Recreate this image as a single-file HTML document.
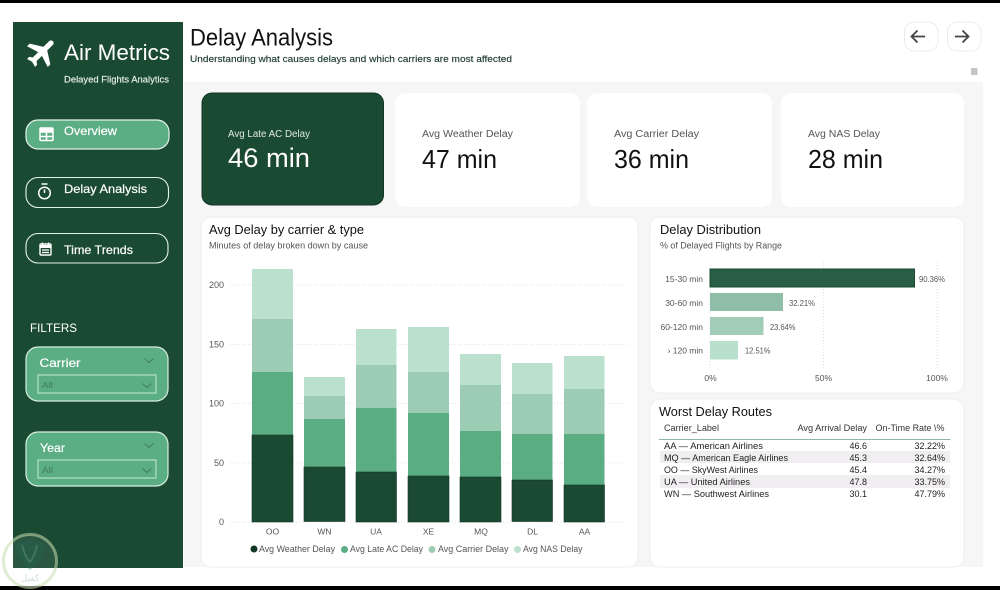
<!DOCTYPE html>
<html><head><meta charset="utf-8"><title>Delay Analysis</title>
<style>
html,body{margin:0;padding:0;background:#fff;width:1000px;height:590px;overflow:hidden}
svg{display:block;filter:blur(.3px)}
text{font-family:"Liberation Sans",sans-serif}
</style></head><body>
<svg width="1000" height="590" viewBox="0 0 1000 590" xmlns="http://www.w3.org/2000/svg">
<rect width="1000" height="590" fill="#fff"/>
<rect x="184" y="82" width="799" height="485" fill="#f6f6f6"/>
<rect width="1000" height="3" fill="#000"/>
<rect y="586" width="1000" height="4" fill="#000"/>

<!-- sidebar -->
<rect x="13" y="22" width="170" height="546" fill="#1b4a33"/>
<path transform="translate(42 52) rotate(45) scale(1.5) translate(-11.500 -12)" fill="#fff" stroke="#fff" stroke-width=".5" d="M21 16v-2l-8-5V3.500c0-.83-.67-1.500-1.500-1.500S10 2.670 10 3.500V9l-8 5v2l8-2.500V19l-2 1.500V22l3.500-1 3.500 1v-1.500L13 19v-5.500l8 2.500z"/>
<text x="64" y="60" font-size="22" fill="#fff" textLength="106" lengthAdjust="spacingAndGlyphs">Air Metrics</text>
<text x="64" y="82.500" font-size="9" fill="#e6f0ea" stroke="#e6f0ea" stroke-width=".15" textLength="105" lengthAdjust="spacingAndGlyphs">Delayed  Flights Analytics</text>

<rect x="26" y="120" width="143" height="29" rx="12" fill="#5bad83" stroke="#e4f3ea" stroke-width="1.200"/>
<g fill="none" stroke="#fff" stroke-width="1.500"><rect x="40" y="128" width="13" height="12.500" rx="1"/><path d="M40 132h13M40 136.500h13M46.500 132v8.500"/></g>
<rect x="40" y="127.500" width="13" height="4" fill="#fff"/>
<text x="64" y="135" font-size="12" fill="#fff" stroke="#fff" stroke-width=".2" textLength="53" lengthAdjust="spacingAndGlyphs">Overview</text>

<rect x="26" y="177.500" width="142.500" height="30" rx="12" fill="none" stroke="#e4f3ea" stroke-width="1.100"/>
<circle cx="44.500" cy="193" r="5.800" fill="none" stroke="#fff" stroke-width="1.500"/>
<path d="M41.500 184h6M44.500 193v-3.500" stroke="#fff" stroke-width="1.500" fill="none"/>
<text x="64" y="193" font-size="12" fill="#fff" stroke="#fff" stroke-width=".2" textLength="83" lengthAdjust="spacingAndGlyphs">Delay Analysis</text>

<rect x="26" y="233.500" width="142" height="29.500" rx="12" fill="none" stroke="#e4f3ea" stroke-width="1.100"/>
<rect x="40" y="244" width="11" height="11" rx="1" fill="none" stroke="#fff" stroke-width="1.400"/>
<path d="M40 246.500h11" stroke="#fff" stroke-width="3"/>
<path d="M42.500 242.500v2.500M48.500 242.500v2.500M42 250h7M42 252.500h7" stroke="#fff" stroke-width="1.200"/>
<text x="64" y="254" font-size="12" fill="#fff" stroke="#fff" stroke-width=".2" textLength="69" lengthAdjust="spacingAndGlyphs">Time Trends</text>

<text x="30" y="332" font-size="12" fill="#fff" textLength="47" lengthAdjust="spacingAndGlyphs">FILTERS</text>

<rect x="26" y="347" width="142" height="54" rx="12" fill="#5bad83" stroke="#d8eee2" stroke-width="1.200"/>
<text x="39.500" y="367" font-size="12" fill="#fff" stroke="#fff" stroke-width=".2" textLength="41" lengthAdjust="spacingAndGlyphs">Carrier</text>
<path d="M144.500 358.500l4.500 4 4.500-4" fill="none" stroke="#3c7f5e" stroke-width="1"/>
<rect x="38" y="375" width="118" height="18" fill="#5bad83" stroke="#acdcc3" stroke-width="1.300"/>
<text x="42" y="388" font-size="8.500" fill="#3f7a5c" textLength="11" lengthAdjust="spacingAndGlyphs">All</text>
<path d="M142.500 383.500l4.500 4 4.500-4" fill="none" stroke="#3c7f5e" stroke-width="1"/>

<rect x="26" y="432" width="142" height="54" rx="12" fill="#5bad83" stroke="#d8eee2" stroke-width="1.200"/>
<text x="40" y="452" font-size="12" fill="#fff" stroke="#fff" stroke-width=".2" textLength="25" lengthAdjust="spacingAndGlyphs">Year</text>
<path d="M144.500 443.500l4.500 4 4.500-4" fill="none" stroke="#3c7f5e" stroke-width="1"/>
<rect x="38" y="460" width="118" height="18" fill="#5bad83" stroke="#acdcc3" stroke-width="1.300"/>
<text x="42" y="473" font-size="8.500" fill="#3f7a5c" textLength="11" lengthAdjust="spacingAndGlyphs">All</text>
<path d="M142.500 468.500l4.500 4 4.500-4" fill="none" stroke="#3c7f5e" stroke-width="1"/>

<!-- watermark -->
<g>
<circle cx="30" cy="561" r="26.500" fill="#ffffff" fill-opacity=".07" stroke="#c6dfae" stroke-opacity=".55" stroke-width="3"/>
<path d="M16 544q14-6 28 0q1 15-14 26q-15-11-14-26z" fill="#1f6a58" opacity=".3"/>
<path d="M22 545q3 12 8 17q5-6 7-17" fill="none" stroke="#6fae91" stroke-opacity=".3" stroke-width="2"/>
<text x="30" y="581" font-size="9" fill="#d4dfd8" text-anchor="middle" style="font-family:'DejaVu Sans',sans-serif">كفيل</text>
</g>

<!-- header -->
<text x="190" y="45.500" font-size="24" fill="#111" textLength="143" lengthAdjust="spacingAndGlyphs">Delay Analysis</text>
<text x="190" y="62" font-size="9.500" fill="#1d3a2c" stroke="#1d3a2c" stroke-width=".15" textLength="322" lengthAdjust="spacingAndGlyphs">Understanding what causes delays and which carriers are most affected</text>
<rect x="904.500" y="22" width="33.500" height="29" rx="10" fill="#fff" stroke="#ececec"/>
<rect x="947.500" y="22" width="33.500" height="29" rx="10" fill="#fff" stroke="#ececec"/>
<path d="M925 36.500h-13.500M917.500 30.500l-6 6 6 6" fill="none" stroke="#444" stroke-width="1.800"/>
<path d="M955 36.500h13.500M962.500 30.500l6 6-6 6" fill="none" stroke="#444" stroke-width="1.800"/>
<rect x="971" y="68" width="6.500" height="7" fill="#c4c4c4"/>

<!-- KPI cards -->
<rect x="202" y="93" width="181.500" height="112" rx="10" fill="#1b4a33" stroke="#123524"/>
<text x="228" y="137" font-size="10" fill="#dfeae4" textLength="82" lengthAdjust="spacingAndGlyphs">Avg Late AC Delay</text>
<text x="228" y="167" font-size="27" fill="#fff" textLength="82" lengthAdjust="spacingAndGlyphs">46 min</text>
<rect x="395" y="93" width="185" height="114" rx="10" fill="#fff"/>
<text x="422" y="137" font-size="10" fill="#555" textLength="91" lengthAdjust="spacingAndGlyphs">Avg Weather Delay</text>
<text x="422" y="168" font-size="26" fill="#111" textLength="75" lengthAdjust="spacingAndGlyphs">47 min</text>
<rect x="587" y="93" width="185" height="114" rx="10" fill="#fff"/>
<text x="614" y="137" font-size="10" fill="#555" textLength="85" lengthAdjust="spacingAndGlyphs">Avg Carrier Delay</text>
<text x="614" y="168" font-size="26" fill="#111" textLength="75" lengthAdjust="spacingAndGlyphs">36 min</text>
<rect x="781" y="93" width="183" height="114" rx="10" fill="#fff"/>
<text x="808" y="137" font-size="10" fill="#555" textLength="72" lengthAdjust="spacingAndGlyphs">Avg NAS Delay</text>
<text x="808" y="168" font-size="26" fill="#111" textLength="75" lengthAdjust="spacingAndGlyphs">28 min</text>

<!-- main chart -->
<rect x="201" y="217" width="437" height="350" rx="10" fill="#fff" stroke="#eeeeee"/>
<text x="209" y="234" font-size="13" fill="#111" textLength="155" lengthAdjust="spacingAndGlyphs">Avg Delay by carrier &amp; type</text>
<text x="209" y="248.500" font-size="9" fill="#555" textLength="159" lengthAdjust="spacingAndGlyphs">Minutes of delay broken down by cause</text>
<g stroke="#e2e2e2" stroke-width="1" stroke-dasharray="1 2">
<path d="M230 285h398M230 344.500h398M230 403.500h398M230 463h398M230 522h398"/>
</g>
<g font-size="9" fill="#555" text-anchor="end">
<text x="224" y="288">200</text><text x="224" y="347.500">150</text><text x="224" y="406.500">100</text><text x="224" y="466">50</text><text x="224" y="525">0</text>
</g>
<g fill="#bbe0cd">
<rect x="252" y="269" width="41" height="50"/><rect x="304" y="377" width="41" height="19"/><rect x="356" y="329" width="40.500" height="36"/><rect x="408" y="327" width="41" height="45"/><rect x="460" y="354" width="41" height="31"/><rect x="512" y="363" width="40.500" height="31"/><rect x="564" y="356" width="40.500" height="33"/>
</g>
<g fill="#9ccdb4">
<rect x="252" y="319" width="41" height="53"/><rect x="304" y="396" width="41" height="23"/><rect x="356" y="365" width="40.500" height="43"/><rect x="408" y="372" width="41" height="41"/><rect x="460" y="385" width="41" height="46"/><rect x="512" y="394" width="40.500" height="40"/><rect x="564" y="389" width="40.500" height="45"/>
</g>
<g fill="#5bae84">
<rect x="252" y="372" width="41" height="63"/><rect x="304" y="419" width="41" height="48"/><rect x="356" y="408" width="40.500" height="64"/><rect x="408" y="413" width="41" height="63"/><rect x="460" y="431" width="41" height="46"/><rect x="512" y="434" width="40.500" height="46"/><rect x="564" y="434" width="40.500" height="51"/>
</g>
<g fill="#1b4a33" stroke="#123826" stroke-width=".6">
<rect x="252" y="435" width="41" height="87"/><rect x="304" y="467" width="41" height="54.500"/><rect x="356" y="472" width="40.500" height="50"/><rect x="408" y="476" width="41" height="46"/><rect x="460" y="477" width="41" height="45"/><rect x="512" y="480" width="40.500" height="41.500"/><rect x="564" y="485" width="40.500" height="37"/>
</g>
<g font-size="8.500" fill="#555" text-anchor="middle">
<text x="272.500" y="534.500">OO</text><text x="324.500" y="534.500">WN</text><text x="376" y="534.500">UA</text><text x="428.500" y="534.500">XE</text><text x="481" y="534.500">MQ</text><text x="532.500" y="534.500">DL</text><text x="584.500" y="534.500">AA</text>
</g>
<circle cx="254" cy="549" r="3.500" fill="#123826"/>
<text x="259" y="552" font-size="9.500" fill="#555" textLength="76" lengthAdjust="spacingAndGlyphs">Avg Weather Delay</text>
<circle cx="344.500" cy="549.500" r="3.500" fill="#5bae84"/>
<text x="350" y="552" font-size="9.500" fill="#555" textLength="73" lengthAdjust="spacingAndGlyphs">Avg Late AC Delay</text>
<circle cx="432" cy="549.500" r="3.500" fill="#9ccdb4"/>
<text x="438" y="552" font-size="9.500" fill="#555" textLength="70.500" lengthAdjust="spacingAndGlyphs">Avg Carrier Delay</text>
<circle cx="517.500" cy="549.500" r="3.500" fill="#bbe0cd"/>
<text x="523" y="552" font-size="9.500" fill="#555" textLength="59.500" lengthAdjust="spacingAndGlyphs">Avg NAS Delay</text>

<!-- distribution -->
<rect x="650" y="217" width="314" height="176" rx="10" fill="#fff" stroke="#eeeeee"/>
<text x="660" y="234" font-size="13" fill="#111" textLength="101" lengthAdjust="spacingAndGlyphs">Delay Distribution</text>
<text x="660" y="248.500" font-size="9" fill="#555" textLength="122" lengthAdjust="spacingAndGlyphs">% of Delayed Flights by Range</text>
<path d="M710 262v106M823.500 262v106M937 262v106" stroke="#e2e2e2" stroke-dasharray="1 2" fill="none"/>
<rect x="710" y="269" width="204.500" height="18" fill="#2a5f47" stroke="#1b4a33"/>
<rect x="710" y="293" width="73" height="18" fill="#8fbda7"/>
<rect x="710" y="317" width="53.500" height="18" fill="#a1ccb8"/>
<rect x="710" y="341" width="28" height="18.500" fill="#b9e0cc"/>
<g font-size="8.500" fill="#555">
<text x="703" y="282" text-anchor="end">15-30 min</text>
<text x="703" y="306" text-anchor="end">30-60 min</text>
<text x="703" y="330" text-anchor="end">60-120 min</text>
<text x="703" y="353.500" text-anchor="end">› 120 min</text>
<text x="919" y="282" textLength="26" lengthAdjust="spacingAndGlyphs">90.36%</text>
<text x="789" y="306" textLength="26" lengthAdjust="spacingAndGlyphs">32.21%</text>
<text x="770" y="330" textLength="25.500" lengthAdjust="spacingAndGlyphs">23.64%</text>
<text x="745" y="353.500" textLength="25.500" lengthAdjust="spacingAndGlyphs">12.51%</text>
<text x="710.500" y="381" text-anchor="middle">0%</text>
<text x="823.500" y="381" text-anchor="middle">50%</text>
<text x="937" y="381" text-anchor="middle">100%</text>
</g>

<!-- table -->
<rect x="650" y="399" width="314" height="168" rx="10" fill="#fff" stroke="#eeeeee"/>
<text x="659" y="416" font-size="13" fill="#111" textLength="113" lengthAdjust="spacingAndGlyphs">Worst Delay Routes</text>
<text x="664" y="431" font-size="9" fill="#333" textLength="55" lengthAdjust="spacingAndGlyphs">Carrier_Label</text>
<text x="797.500" y="431" font-size="9" fill="#333" textLength="69.500" lengthAdjust="spacingAndGlyphs">Avg Arrival Delay</text>
<text x="875.500" y="431" font-size="9" fill="#333" textLength="69" lengthAdjust="spacingAndGlyphs">On-Time Rate \%</text>
<rect x="659" y="439" width="291.500" height="1" fill="#8fb5a8"/>
<rect x="660" y="451" width="290" height="12" fill="#f1eef1"/>
<rect x="660" y="475" width="290" height="13" fill="#f1eef1"/>
<g font-size="9" fill="#222">
<text x="664" y="449" textLength="99" lengthAdjust="spacingAndGlyphs">AA — American Airlines</text>
<text x="664" y="461" textLength="124" lengthAdjust="spacingAndGlyphs">MQ — American Eagle Airlines</text>
<text x="664" y="473" textLength="94" lengthAdjust="spacingAndGlyphs">OO — SkyWest Airlines</text>
<text x="664" y="485" textLength="86" lengthAdjust="spacingAndGlyphs">UA — United Airlines</text>
<text x="664" y="497" textLength="105" lengthAdjust="spacingAndGlyphs">WN — Southwest Airlines</text>
<g text-anchor="end">
<text x="867" y="449">46.6</text><text x="867" y="461">45.3</text><text x="867" y="473">45.4</text><text x="867" y="485">47.8</text><text x="867" y="497">30.1</text>
<text x="945" y="449">32.22%</text><text x="945" y="461">32.64%</text><text x="945" y="473">34.27%</text><text x="945" y="485">33.75%</text><text x="945" y="497">47.79%</text>
</g>
</g>
</svg>
</body></html>
